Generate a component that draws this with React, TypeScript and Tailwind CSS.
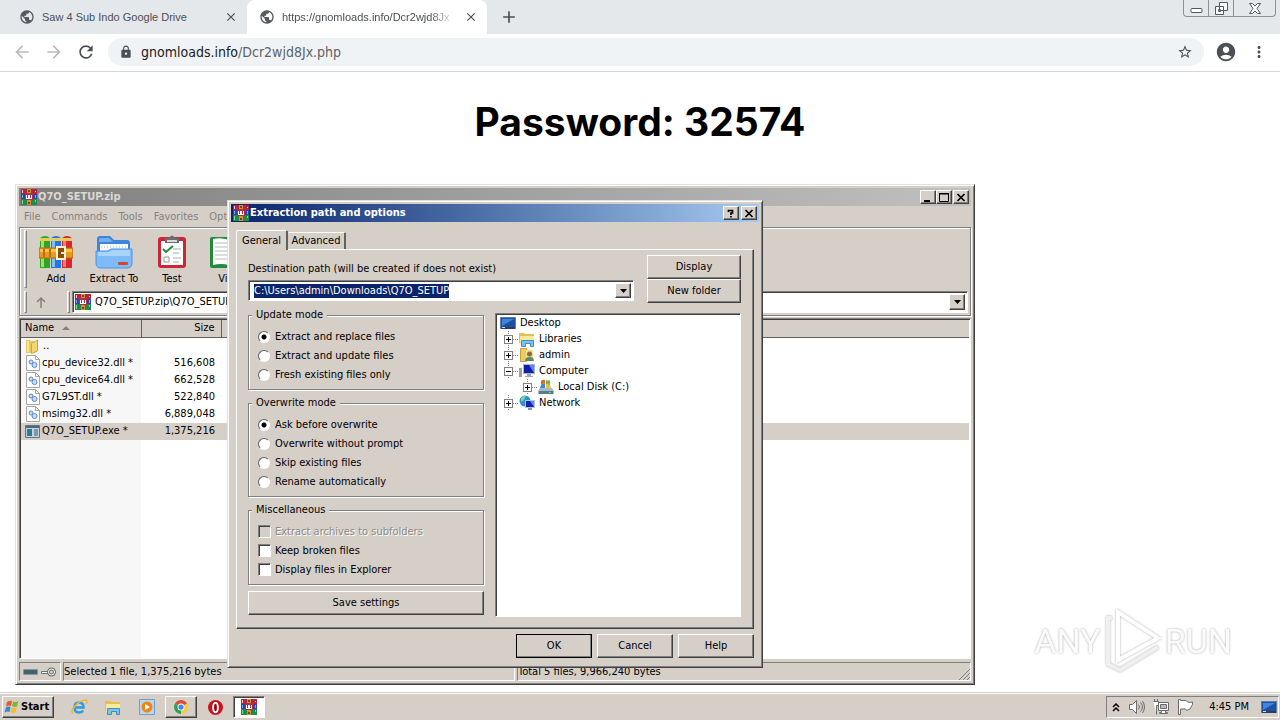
import type { ReactNode } from 'react'
import clsx from 'clsx'
import { MdArrowBack, MdArrowForward, MdRefresh, MdLock, MdStarBorder, MdAccountCircle, MdMoreVert, MdPublic, MdClose, MdAdd } from 'react-icons/md'

const raised = 'border border-t-white border-l-white border-r-[#404040] border-b-[#404040] shadow-[inset_-1px_-1px_0_#808080] bg-[#d6cfc8]'
const sunken = 'border border-t-[#808080] border-l-[#808080] border-r-white border-b-white shadow-[inset_1px_1px_0_#404040] bg-white'
const thinSunken = 'border border-t-[#808080] border-l-[#808080] border-r-white border-b-white'
const frame = 'border border-t-[#e4e0dc] border-l-[#e4e0dc] border-r-[#404040] border-b-[#404040] shadow-[inset_1px_1px_0_#fff,inset_-1px_-1px_0_#808080] bg-[#d6cfc8]'

const files = [
  { name: 'cpu_device32.dll *', size: '516,608' },
  { name: 'cpu_device64.dll *', size: '662,528' },
  { name: 'G7L9ST.dll *', size: '522,840' },
  { name: 'msimg32.dll *', size: '6,889,048' },
  { name: 'Q7O_SETUP.exe *', size: '1,375,216', selected: true },
]

function BooksIcon({ className }: { className: string }) {
  return (
    <svg viewBox="0 0 16 16" className={className} shapeRendering="crispEdges" aria-hidden="true">
      <path fill="#b3243a" d="M0 0h16v5H0z" />
      <path fill="#2f45a5" d="M0 5h16v5H0z" />
      <path fill="#1f8a4c" d="M0 10h16v6H0z" />
      <path fill="#f0c4c0" d="M1 1h1v3H1zM14 2h1v1h-1z" />
      <path fill="#8aa4f0" d="M1 6h1v3H1zM14 6h1v3h-1z" />
      <path fill="#7fd884" d="M1 11h1v4H1zM14 11h1v2h-1z" />
      <path fill="#d98f2b" d="M6 0h4v4H6zM6 11h4v5H6z" />
      <path fill="#7a4316" d="M7 1h2v2H7zM7 13h2v2H7z" />
      <path fill="#a3324f" d="M4 4h8v7H4z" />
      <path fill="#fff" d="M5 6h1v3h1V6h2v3h1V6h1v4H5z" />
    </svg>
  )
}

function AddIcon() {
  return (
    <svg viewBox="0 0 34 34" className="size-[34px]" aria-hidden="true">
      <path fill="#2fa32b" d="M1 3q5-4 10 0v30H1z" />
      <path fill="#2676dd" d="M12 3q5-4 10 0v30H12z" />
      <path fill="#d8262f" d="M23 3q5-4 10 0v30H23z" />
      <path fill="#a9e04c" d="M2 3h3v29H2z" />
      <path fill="#79c5fb" d="M13 3h3v29h-3z" />
      <path fill="#f57c76" d="M24 3h3v29h-3z" />
      <path fill="#e5cf53" d="M1 3h10v3H1zM12 3h10v3H12zM23 3h10v3H23z" />
      <path fill="#e99a1f" stroke="#b8660c" d="M0 13h34v10H0z" />
      <path fill="#f9c450" d="M1 14h32v3H1z" />
      <path fill="#c26b10" d="M4 14h2v8H4zM10 14h2v8h-2z" />
      <path fill="#8c4a0b" stroke="#fff4cf" strokeWidth="2" d="M18 12h8v12h-8z" />
      <path stroke="#fff4cf" strokeWidth="2" d="M22 18h5" />
    </svg>
  )
}

function ExtractIcon() {
  return (
    <svg viewBox="0 0 38 34" className="h-[34px] w-[38px]" aria-hidden="true">
      <path fill="#3f83dc" d="M2 4q0-3 3-3h10l4 4h13q3 0 3 3v11H2z" />
      <path fill="#6fb0f4" d="M4 5q0-2 2-2h8l4 4h-14z" />
      <path fill="#f4f8ff" d="M5 9h28v8H5z" />
      <path stroke="#9fbfe8" strokeDasharray="1 2" d="M6 12h26" />
      <path fill="#7dbbf9" stroke="#4a94ea" d="M1 16h12l3-2h21v14q0 5-5 5H6q-5 0-5-5z" />
      <path fill="#a9d4fd" d="M3 17h11l3-2h18v6H3z" />
      <rect x="23" y="27" width="10" height="3" rx="1" fill="#d8452d" />
    </svg>
  )
}

function TestIcon() {
  return (
    <svg viewBox="0 0 30 34" className="h-[34px] w-[30px]" aria-hidden="true">
      <rect x="1" y="2" width="28" height="31" rx="3" fill="#cd2636" />
      <path fill="#fff" d="M4 6h22v24H4z" />
      <path fill="#6b6b70" d="M8 3h4q3-5 6 0h4v5H8z" />
      <path fill="#d8d8dc" d="M10 5h10v2H10z" />
      <path fill="none" stroke="#1b8c3a" strokeWidth="2" d="m6 14 3 3 7-6" />
      <path stroke="#aaa" d="M16 14h8M16 18h6M16 23h8M16 27h6" />
      <path fill="none" stroke="#999" d="M7 22h5v5H7z" />
    </svg>
  )
}

function ViewIcon() {
  return (
    <svg viewBox="0 0 42 34" className="h-[34px] w-[42px]" aria-hidden="true">
      <rect x="1" y="2" width="40" height="31" rx="2" fill="#1f8b3b" />
      <path fill="#fff" d="M4 4q8-2 16 1v25q-8-2-16 0zM22 5q8-3 16-1v26q-8-2-16 0z" />
      <path stroke="#bbb" d="M6 8h12M6 12h12M6 16h12M6 20h12M6 24h12M24 8h12M24 12h12M24 16h12M24 20h12" />
    </svg>
  )
}

function DllIcon() {
  return (
    <svg viewBox="0 0 14 16" className="h-4 w-[14px]" aria-hidden="true">
      <path fill="#fff" stroke="#a5a5a5" d="M.5.5h9l4 4v11H.5z" />
      <path fill="none" stroke="#a5a5a5" d="M9.500.5v4h4" />
      <circle cx="5" cy="7" r="2" fill="#c9dcf3" stroke="#5b88c6" />
      <circle cx="8.500" cy="10" r="2.500" fill="#c9dcf3" stroke="#5b88c6" />
    </svg>
  )
}

function ExeIcon() {
  return (
    <svg viewBox="0 0 15 13" className="h-[13px] w-[15px]" aria-hidden="true">
      <path fill="#c6d3de" stroke="#66727f" d="M.5.5h14v12H.5z" />
      <path fill="#51687f" d="M1 1h13v2H1z" />
      <path fill="#2a7d97" d="M2 4h5v7H2z" />
      <path fill="#7f98b0" d="M9 4h4v7H9z" />
    </svg>
  )
}

function FolderIcon() {
  return (
    <svg viewBox="0 0 14 15" className="h-[15px] w-[14px]" aria-hidden="true">
      <path fill="#e8c95a" d="M1 1h4l1 1h3v12H1z" />
      <path fill="#f8e697" d="M2 2h2v11H2z" />
      <path fill="#f2d871" stroke="#cda63a" d="M6.500 4.500 12.500 1v11l-6 2.500z" />
    </svg>
  )
}

function MonitorIcon() {
  return (
    <svg viewBox="0 0 16 14" className="h-[14px] w-4" aria-hidden="true">
      <path fill="#1f4f9e" stroke="#5f7da6" d="M.5 1.500h15v11H.5z" />
      <path fill="#3f86dd" d="M2 3h12L2 10z" />
      <path fill="#27405f" d="M1 11h14v2H1z" />
      <path fill="#cfe3f7" d="M2 11h3v1H2z" />
    </svg>
  )
}

function LibraryIcon({ className = 'size-4' }: { className?: string }) {
  return (
    <svg viewBox="0 0 16 16" className={className} aria-hidden="true">
      <path fill="#e4c04d" d="M0 2h5l1 1h9v9H0z" />
      <path fill="#f9eaa0" d="M1 5h14v8H1z" />
      <path fill="#7cc3e8" stroke="#3d8fc4" d="M2.500 15.500v-6h12v6h-3v-3h-5v3z" />
    </svg>
  )
}

function UserIcon() {
  return (
    <svg viewBox="0 0 16 16" className="size-4" aria-hidden="true">
      <path fill="#eacb66" stroke="#c99f3d" d="M1.500 1.500h6v13h-6z" />
      <path fill="#f3dc8c" d="M7 3h7v11H7z" />
      <circle cx="10.500" cy="7" r="2.500" fill="#8d6a4b" />
      <path fill="#5f8a68" d="M6 14q0-4 4.500-4t4.500 4z" />
    </svg>
  )
}

function ComputerIcon() {
  return (
    <svg viewBox="0 0 16 16" className="size-4" aria-hidden="true">
      <path fill="#9aa59c" d="M0 5h3v9H0z" />
      <path fill="#a8b4cc" d="M4 1h12v10H4z" />
      <path fill="#101fa8" d="M5 2h10v8H5z" />
      <path fill="#5d86e8" d="M10 2h5v8z" />
      <path fill="#98a6b8" d="M8 11h4v2h2v1H6v-1h2z" />
    </svg>
  )
}

function DriveIcon() {
  return (
    <svg viewBox="0 0 16 16" className="size-4" aria-hidden="true">
      <path fill="#e9632c" d="M3 2q2-2 4-1v4Q5 4 3 6z" />
      <path fill="#77b83b" d="M8 1q2 1 4 0v5Q10 6 8 5z" />
      <path fill="#3b8ad6" d="M3 6q2-2 4-1v4H2z" />
      <path fill="#f1bd2e" d="M8 5q2 1 4 1l1 4H8z" />
      <path fill="#a9bcc6" d="m0 12 2-3h12l2 3v3H0z" />
      <path fill="#4f7f8c" d="M1 12h14v3H1z" />
      <path fill="#8fd24d" d="M11 13h2v1h-2z" />
    </svg>
  )
}

function NetworkIcon() {
  return (
    <svg viewBox="0 0 16 16" className="size-4" aria-hidden="true">
      <circle cx="6" cy="6" r="5.500" fill="#2f93c8" />
      <path fill="#7bd0a2" d="M2 3q3-3 5-2l-2 4-3 2zM6 7l3 1-2 3z" />
      <path fill="#b6c2d6" d="M6 5h10v8H6z" />
      <path fill="#1024b4" d="M7 6h8v6H7z" />
      <path fill="#5d8bf0" d="M11 6h4v6z" />
      <path fill="#8a97a8" d="M9 13h4v2H9z" />
    </svg>
  )
}

function CaptionButton({ label, children }: { label: string; children: ReactNode }) {
  return (
    <button aria-label={label} className={clsx(raised, 'flex h-[14px] w-4 items-center justify-center')}>
      <svg viewBox="0 0 10 9" className="h-[9px] w-[10px]" fill="none" stroke="#000" aria-hidden="true">{children}</svg>
    </button>
  )
}

const cross = <path strokeWidth="1.700" d="m1.500 1 7 7m0-7-7 7" />

function DropArrow({ label }: { label: string }) {
  return (
    <button aria-label={label} className={clsx(raised, 'flex w-4 shrink-0 items-center justify-center')}>
      <svg viewBox="0 0 7 4" className="h-1 w-[7px]" aria-hidden="true"><path d="M0 0h7L3.500 4z" /></svg>
    </button>
  )
}

function PushButton({ children, className }: { children: ReactNode; className?: string }) {
  return <button className={clsx(raised, 'h-6 text-center', className)}>{children}</button>
}

function Group({ title, children, className }: { title: string; children: ReactNode; className?: string }) {
  return (
    <fieldset className={clsx('border border-[#808080] px-[9px] pt-[6px] shadow-[1px_1px_0_#fff,inset_1px_1px_0_#fff]', className)}>
      <legend className="-ml-[6px] bg-[#d6cfc8] px-1 leading-3">{title}</legend>
      {children}
    </fieldset>
  )
}

function Radio({ name, label, checked }: { name: string; label: string; checked?: boolean }) {
  return (
    <label className="flex h-[19px] items-center gap-[5px]">
      <input
        type="radio"
        name={name}
        defaultChecked={checked}
        className="size-3 appearance-none rounded-full border border-t-[#606060] border-l-[#606060] border-r-white border-b-white bg-white checked:bg-[radial-gradient(circle,#000_2px,#fff_3px)]"
      />
      {label}
    </label>
  )
}

function Check({ label, disabled }: { label: string; disabled?: boolean }) {
  return (
    <label className={clsx('flex h-[19px] items-center gap-1', disabled && 'text-[#8c8a86] [text-shadow:1px_1px_0_#fff]')}>
      <input type="checkbox" disabled={disabled} className={clsx(sunken, 'size-[13px] appearance-none disabled:bg-[#d6cfc8]')} />
      {label}
    </label>
  )
}

function TreeRow({ icon, label, depth, open }: { icon: ReactNode; label: string; depth: number; open?: boolean }) {
  return (
    <li className={clsx('flex h-4 items-center', depth === 1 && 'pl-1', depth === 2 && 'pl-[23px]')}>
      {depth > 0 && (
        <svg viewBox="0 0 15 16" className="h-4 w-[15px] shrink-0" fill="none" shapeRendering="crispEdges" aria-hidden="true">
          <path stroke="#808080" strokeDasharray="1 1" d="M4.500 0v16M9 8.500h6" />
          <path fill="#fff" stroke="#808080" d="M.5 4.500h8v8h-8z" />
          <path stroke="#000" d="M2 8.500h5" />
          {!open && <path stroke="#000" d="M4.500 6v5" />}
        </svg>
      )}
      {icon}
      <span className="ml-1">{label}</span>
    </li>
  )
}

function BrowserTab({ title, active }: { title: string; active?: boolean }) {
  return (
    <div className={clsx('flex h-full w-60 items-center pr-[9px] pl-3', active ? 'rounded-t-lg bg-white' : 'ml-[7px]')}>
      <MdPublic className="size-4 shrink-0 text-[#55585c]" />
      <span className={clsx("ml-[7px] flex-1 font-['Liberation_Sans',sans-serif] text-[11px] whitespace-nowrap text-[#4c4f53]", active && '[mask-image:linear-gradient(to_right,#000_85%,transparent)]')}>{title}</span>
      <button aria-label="Close tab" className="ml-2"><MdClose className="size-[14px] text-[#4c4f53]" /></button>
    </div>
  )
}

function Browser() {
  return (
    <header>
      <div className="flex h-[34px] items-center bg-[#e4e8eb]">
        <BrowserTab title="Saw 4 Sub Indo Google Drive" />
        <BrowserTab title="https://gnomloads.info/Dcr2wjd8Jx" active />
        <button aria-label="New tab" className="ml-3"><MdAdd className="size-5 text-[#4c4f53]" /></button>
        <div className="mr-1 ml-auto flex h-[17px] self-start rounded-b border border-t-0 border-[#8d9195]">
          <button aria-label="Minimize" className="flex w-[25px] items-center justify-center border-r border-[#8d9195]">
            <svg viewBox="0 0 13 12" className="h-3 w-[13px]" fill="#fff" stroke="#55585c" aria-hidden="true"><rect x="1" y="6.500" width="11" height="4" rx="1" /></svg>
          </button>
          <button aria-label="Restore" className="flex w-[25px] items-center justify-center border-r border-[#8d9195]">
            <svg viewBox="0 0 13 13" className="size-[13px]" fill="#fff" stroke="#55585c" aria-hidden="true"><path d="M4.500.5h8v8h-8zM.5 4.500h8v8h-8zM3.500 7.500h2v2h-2z" /></svg>
          </button>
          <button aria-label="Close" className="flex w-[41px] items-center justify-center">
            <svg viewBox="0 0 12 11" className="h-[11px] w-3" fill="#fff" stroke="#55585c" aria-hidden="true"><path d="M.5.5h3L6 3 8.500.5h3L8 5.500l3.500 5h-3L6 8l-2.500 2.500h-3L4 5.500z" /></svg>
          </button>
        </div>
      </div>
      <div className="flex h-[38px] items-center border-b border-[#d5d8db] bg-white px-3 pb-px">
        <button aria-label="Back"><MdArrowBack className="size-5 text-[#b9bbbe]" /></button>
        <button aria-label="Forward" className="ml-3"><MdArrowForward className="size-5 text-[#b9bbbe]" /></button>
        <button aria-label="Reload" className="ml-3"><MdRefresh className="size-5 text-[#4c4f53]" /></button>
        <div className="ml-3 flex h-7 flex-1 items-center rounded-full bg-[#eff3f5] px-[11px]">
          <MdLock className="size-[14px] text-[#4c4f53]" />
          <p className="ml-2 flex-1 text-[14px] text-[#5f6368]"><span className="text-[#202124]">gnomloads.info</span>/Dcr2wjd8Jx.php</p>
          <button aria-label="Bookmark"><MdStarBorder className="size-4 text-[#4c4f53]" /></button>
        </div>
        <button aria-label="Profile" className="ml-[11px]"><MdAccountCircle className="size-[22px] text-[#4c4f53]" /></button>
        <button aria-label="Menu" className="ml-[13px]"><MdMoreVert className="size-[18px] text-[#4c4f53]" /></button>
      </div>
    </header>
  )
}

function ToolButton({ icon, label }: { icon: ReactNode; label: string }) {
  return (
    <button className="flex w-[58px] flex-col items-center gap-[2px] pt-[5px]">
      {icon}
      <span className="leading-4">{label}</span>
    </button>
  )
}

const Grip = () => <span className="w-[3px] self-stretch border border-t-white border-r-[#808080] border-b-[#808080] border-l-white" />

function ArchiveWindow() {
  return (
    <section aria-label="Q7O_SETUP.zip" className={clsx(frame, 'absolute top-28 left-[15px] flex h-[501px] w-[960px] flex-col p-[3px]')}>
      <div className="flex h-[18px] items-center gap-px bg-linear-to-r from-[#808080] to-[#c0c0c0] px-[2px] font-bold text-[#dcd8d2]">
        <BooksIcon className="size-4" />
        <h2 className="flex-1">Q7O_SETUP.zip</h2>
        <div className="flex">
          <CaptionButton label="Minimize"><path strokeWidth="2" d="M1 8h6" /></CaptionButton>
          <CaptionButton label="Maximize"><path d="M.5 1h9M.5 0v8.500h9V0M.5.5h9" /></CaptionButton>
        </div>
        <CaptionButton label="Close">{cross}</CaptionButton>
      </div>
      <nav className="flex h-[21px] items-center gap-[11px] pl-[5px] text-[#85817c]">
        <button>File</button>
        <button>Commands</button>
        <button>Tools</button>
        <button>Favorites</button>
        <button>Options</button>
      </nav>
      <div className="flex h-[89px] flex-col border border-[#808080] pt-[2px] pr-[2px] pl-1 shadow-[inset_1px_1px_0_#fff,1px_1px_0_#fff]">
        <div className="flex h-[58px]">
          <Grip />
          <ToolButton icon={<AddIcon />} label="Add" />
          <ToolButton icon={<ExtractIcon />} label="Extract To" />
          <ToolButton icon={<TestIcon />} label="Test" />
          <ToolButton icon={<ViewIcon />} label="View" />
        </div>
        <div className="mt-[3px] flex h-[22px] items-center">
          <Grip />
          <button aria-label="Up one level" className="flex w-7 justify-center">
            <svg viewBox="0 0 10 11" className="h-[11px] w-[10px]" fill="none" stroke="#85817c" strokeWidth="1.500" aria-hidden="true"><path d="M5 11V1M1 5l4-4 4 4" /></svg>
          </button>
          <div className="w-3" />
          <Grip />
          <div className={clsx(sunken, 'ml-[2px] flex flex-1 self-stretch p-[2px]')}>
            <BooksIcon className="mr-1 size-4" />
            <input aria-label="Archive path" defaultValue="Q7O_SETUP.zip\Q7O_SETUP" className="min-w-0 flex-1" />
            <DropArrow label="Show path list" />
          </div>
        </div>
      </div>
      <div className={clsx(sunken, 'mt-[2px] flex-1 bg-linear-to-r from-[#f7f7f7] from-[121px] to-white to-[121px] p-px')}>
        <table className="w-full table-fixed">
          <thead>
            <tr className="h-[17px] bg-[#d6cfc8]">
              <th className="w-[120px] border-r border-b border-[#606060] pl-1 font-normal">
                <div className="flex h-4 items-center gap-2">
                  Name
                  <svg viewBox="0 0 8 4" className="h-1 w-2" fill="#85817c" aria-hidden="true"><path d="M4 0l4 4H0z" /></svg>
                </div>
              </th>
              <th className="w-20 border-r border-b border-[#606060] pr-[6px] text-right leading-4 font-normal">Size</th>
              <th className="border-b border-[#606060]" aria-label="Details" />
            </tr>
          </thead>
          <tbody>
            <tr className="h-[17px]">
              <td className="pl-1"><div className="flex h-[17px] items-center gap-1"><FolderIcon />..</div></td>
            </tr>
            {files.map((file) => (
              <tr key={file.name} className={clsx('h-[17px]', file.selected && 'bg-[#d6cfc8]')}>
                <td className="whitespace-nowrap">
                  <div className={clsx('flex h-[17px] items-center gap-[2px]', file.selected ? 'pl-1' : 'pl-[5px]')}>
                    {file.selected ? <ExeIcon /> : <DllIcon />}
                    {file.name}
                  </div>
                </td>
                <td className="pr-[6px] text-right leading-4">{file.size}</td>
                <td />
              </tr>
            ))}
          </tbody>
        </table>
      </div>
      <footer className="mt-[3px] flex h-[19px] gap-[2px] leading-[18px]">
        <div className={clsx(thinSunken, 'flex w-[42px] items-center px-[3px]')}>
          <svg viewBox="0 0 34 10" className="h-[10px] w-[34px]" aria-hidden="true">
            <path fill="#3d6670" stroke="#929292" d="M.5 2.500h14v5H.5z" />
            <path fill="#f4f4f4" stroke="#707070" d="M18.500 4.500h7v2h-7z" />
            <circle cx="28.500" cy="5" r="3" fill="none" stroke="#707070" strokeWidth="3" />
            <circle cx="28.500" cy="5" r="3" fill="none" stroke="#f4f4f4" />
          </svg>
        </div>
        <p className={clsx(thinSunken, 'w-[452px]')}>Selected 1 file, 1,375,216 bytes</p>
        <div className={clsx(thinSunken, 'flex flex-1 justify-between')}>
          <p>Total 5 files, 9,966,240 bytes</p>
          <svg viewBox="0 0 12 12" className="size-3 self-end" stroke="#808080" aria-hidden="true"><path d="M12 1 1 12M12 5l-7 7M12 9l-3 3" /></svg>
        </div>
      </footer>
    </section>
  )
}

function ExtractDialog() {
  return (
    <section role="dialog" aria-label="Extraction path and options" className={clsx(frame, 'absolute top-32 left-[227px] flex h-[468px] w-[536px] flex-col p-[3px]')}>
      <div className="flex h-[18px] items-center gap-px bg-linear-to-r from-[#0a246a] to-[#a6caf0] px-[2px] font-bold text-white">
        <BooksIcon className="size-4" />
        <h2 className="flex-1">Extraction path and options</h2>
        <div className="flex gap-[2px]">
          <CaptionButton label="Help"><path strokeWidth="1.700" d="M2.500 3V1.500h4V4H5v2M5 7v1.500" /></CaptionButton>
          <CaptionButton label="Close">{cross}</CaptionButton>
        </div>
      </div>
      <div role="tablist" className="mt-2 flex h-[19px] items-end px-[5px]">
        <button role="tab" aria-selected="true" className="relative z-10 -mb-px h-5 w-[52px] rounded-t-[2px] border-t border-r-2 border-l border-t-white border-r-[#606060] border-l-white bg-[#d6cfc8]">General</button>
        <button role="tab" aria-selected="false" className="h-[17px] w-[58px] rounded-t-[2px] border-t border-r-2 border-t-white border-r-[#606060]">Advanced</button>
      </div>
      <div className={clsx(raised, 'mx-[5px] flex h-[380px] flex-col pt-[5px] pr-3 pl-[11px]')}>
        <div className="flex h-[54px] gap-[13px]">
          <div className="flex-1">
            <label htmlFor="destination" className="block pt-[6px] leading-4">Destination path (will be created if does not exist)</label>
            <div className={clsx(sunken, 'mt-[3px] flex h-[21px] p-[2px]')}>
              <div className="flex flex-1 items-center pl-[3px]">
                <input id="destination" defaultValue="C:\Users\admin\Downloads\Q7O_SETUP" className="h-[14px] bg-[#0a246a] text-white [field-sizing:content]" />
              </div>
              <DropArrow label="Show recent paths" />
            </div>
          </div>
          <div className="flex w-[94px] flex-col">
            <PushButton>Display</PushButton>
            <PushButton>New folder</PushButton>
          </div>
        </div>
        <div className="flex gap-[11px]">
          <div className="flex w-[236px] flex-col">
            <Group title="Update mode" className="h-[81px]">
              <Radio name="update" label="Extract and replace files" checked />
              <Radio name="update" label="Extract and update files" />
              <Radio name="update" label="Fresh existing files only" />
            </Group>
            <Group title="Overwrite mode" className="mt-[7px] h-[100px]">
              <Radio name="overwrite" label="Ask before overwrite" checked />
              <Radio name="overwrite" label="Overwrite without prompt" />
              <Radio name="overwrite" label="Skip existing files" />
              <Radio name="overwrite" label="Rename automatically" />
            </Group>
            <Group title="Miscellaneous" className="mt-[7px] h-[81px]">
              <Check label="Extract archives to subfolders" disabled />
              <Check label="Keep broken files" />
              <Check label="Display files in Explorer" />
            </Group>
            <PushButton className="mt-[6px]">Save settings</PushButton>
          </div>
          <ul className={clsx(sunken, 'mt-1 h-[304px] flex-1 py-px pl-1')}>
            <TreeRow icon={<MonitorIcon />} label="Desktop" depth={0} />
            <TreeRow icon={<LibraryIcon />} label="Libraries" depth={1} />
            <TreeRow icon={<UserIcon />} label="admin" depth={1} />
            <TreeRow icon={<ComputerIcon />} label="Computer" depth={1} open />
            <TreeRow icon={<DriveIcon />} label="Local Disk (C:)" depth={2} />
            <TreeRow icon={<NetworkIcon />} label="Network" depth={1} />
          </ul>
        </div>
      </div>
      <div className="mt-[5px] flex justify-end gap-[5px] pr-[5px]">
        <PushButton className="w-[76px] outline-1 -outline-offset-1 outline-black">OK</PushButton>
        <PushButton className="w-[76px]">Cancel</PushButton>
        <PushButton className="w-[76px]">Help</PushButton>
      </div>
    </section>
  )
}

function Watermark() {
  return (
    <div className="absolute right-12 bottom-5 flex items-center gap-[3px] font-['Roboto',sans-serif] text-[34px] leading-none text-[#fbfbfb] drop-shadow-[0_0_1px_#aaa]">
      <span>ANY</span>
      <svg viewBox="0 0 58 64" className="h-16 w-[58px]" fill="none" stroke="#fff" strokeWidth="4" aria-hidden="true">
        <path d="M14 3v48l40-22z" />
        <path stroke="#f0f0f0" d="M8 9H4v46l12 6 38-23" />
      </svg>
      <span>RUN</span>
    </div>
  )
}

function Taskbar() {
  return (
    <footer className="flex h-[27px] items-center border-t border-white bg-[#d6cfc8] pr-px pl-[2px] shadow-[0_-1px_0_#d6cfc8]">
      <button className={clsx(raised, 'flex h-[22px] w-[52px] items-center gap-px pl-px font-bold')}>
        <svg viewBox="0 0 16 16" className="size-4 shrink-0" aria-hidden="true">
          <path fill="#e8582a" d="M3 3q2.500-2 5-1L7 7Q4.500 6 2 7.500z" />
          <path fill="#7db63a" d="M9 2.500q2.500 1 5.500-.5L13 7.500q-2.500 1-5-.5z" />
          <path fill="#3b86d4" d="M2 8.500Q4 7 6.500 8l-1 5Q3 12 .5 13.500z" />
          <path fill="#f2bd2d" d="M7.500 8.500q2.500 1 5.500 0l-1.500 5q-2.500 1-5-.5z" />
        </svg>
        Start
      </button>
      <nav className="ml-[9px] flex items-center gap-[2px]">
        <button aria-label="Internet Explorer" className="flex w-8 justify-center">
          <svg viewBox="0 0 18 18" className="size-[18px]" fill="none" aria-hidden="true">
            <path stroke="#2f9be0" strokeWidth="2.500" d="M4.500 9.500h9q0-5-4.500-5t-4.500 5 4.500 5q3 0 4-2" />
            <path stroke="#e8b93c" strokeWidth="1.500" d="M3 15q-3-1 2-7t11-6q2 1 0 4" />
          </svg>
        </button>
        <button aria-label="Explorer" className="flex w-8 justify-center"><LibraryIcon /></button>
        <button aria-label="Media Player" className="flex w-8 justify-center">
          <svg viewBox="0 0 16 16" className="size-4" aria-hidden="true">
            <path fill="#b7d7ef" stroke="#6ba1cc" d="M.5.5h15v15H.5z" />
            <circle cx="8" cy="8" r="5.500" fill="#f08417" />
            <path fill="#fff" d="m6 5 5 3-5 3z" />
          </svg>
        </button>
        <button aria-label="Chrome" className={clsx(raised, 'flex h-[22px] w-8 items-center justify-center')}>
          <svg viewBox="0 0 16 16" className="size-[14px]" aria-hidden="true">
            <path fill="#dd4b3a" d="M8 8 1.100 4A8 8 0 0 1 14.900 4z" />
            <path fill="#f7cb3b" d="M8 8l6.900-4A8 8 0 0 1 8 16z" />
            <path fill="#2fa14f" d="M8 8v8A8 8 0 0 1 1.100 4z" />
            <circle cx="8" cy="8" r="4" fill="#fff" />
            <circle cx="8" cy="8" r="3" fill="#4285f4" />
          </svg>
        </button>
        <button aria-label="Opera" className="flex w-8 justify-center">
          <svg viewBox="0 0 16 16" className="size-[15px]" aria-hidden="true">
            <circle cx="8" cy="8" r="8" fill="#c8141f" />
            <ellipse cx="8" cy="8" rx="2.500" ry="5" fill="#8d0912" stroke="#fff" strokeWidth="2" />
          </svg>
        </button>
        <button aria-label="WinRAR" className={clsx(sunken, 'flex h-[22px] w-8 items-center justify-center')}><BooksIcon className="size-4" /></button>
      </nav>
      <div className={clsx(thinSunken, 'ml-auto flex h-[22px] w-[173px] items-center pr-px pl-[5px]')}>
        <button aria-label="Show hidden icons">
          <svg viewBox="0 0 8 9" className="h-[9px] w-2" fill="none" stroke="#000" strokeWidth="1.500" aria-hidden="true"><path d="m1 4 3-3 3 3M1 8l3-3 3 3" /></svg>
        </button>
        <svg viewBox="0 0 16 14" className="ml-[9px] h-[14px] w-4" fill="#fff" stroke="#6a6a6a" aria-hidden="true">
          <path d="M.5 4.500h3l4-4v13l-4-4h-3z" />
          <path fill="none" d="M9.500 4.500q2 2.500 0 5M11.500 2.500q4 4.500 0 9M13.500 1q4 6 0 12" />
        </svg>
        <svg viewBox="0 0 16 16" className="ml-2 size-4" fill="#fff" stroke="#6a6a6a" aria-hidden="true">
          <path d="M5.500 3.500h10v8h-10zM8.500 11.500v2h-2v1h8v-1h-2v-2zM.5 2.500h5v4h-2v9M1.500 0v3M4.500 0v3" />
          <path fill="#bbb" d="M7.500 5.500h6v4h-6z" />
        </svg>
        <svg viewBox="0 0 16 16" className="ml-2 size-4" fill="#fff" stroke="#6a6a6a" aria-hidden="true"><path d="M1.500.5v15h2V10h5l1 1.500q4 0 6-6V3q-3 1-5 0L9 1.500H3.500v-1z" /></svg>
        <time className="mr-3 ml-auto">4:45 PM</time>
        <MonitorIcon />
      </div>
    </footer>
  )
}

export default function App() {
  return (
    <div className="flex min-h-screen flex-col bg-white font-['DejaVu_Sans_Condensed','DejaVu_Sans',sans-serif] text-[11px] leading-4 text-black">
      <Browser />
      <main className="relative min-h-[621px] flex-1">
        <h1 className="pt-[26px] text-center font-['Inter',sans-serif] text-[39px] leading-[48px] font-bold">Password: 32574</h1>
        <ArchiveWindow />
        <ExtractDialog />
        <Watermark />
      </main>
      <Taskbar />
    </div>
  )
}
